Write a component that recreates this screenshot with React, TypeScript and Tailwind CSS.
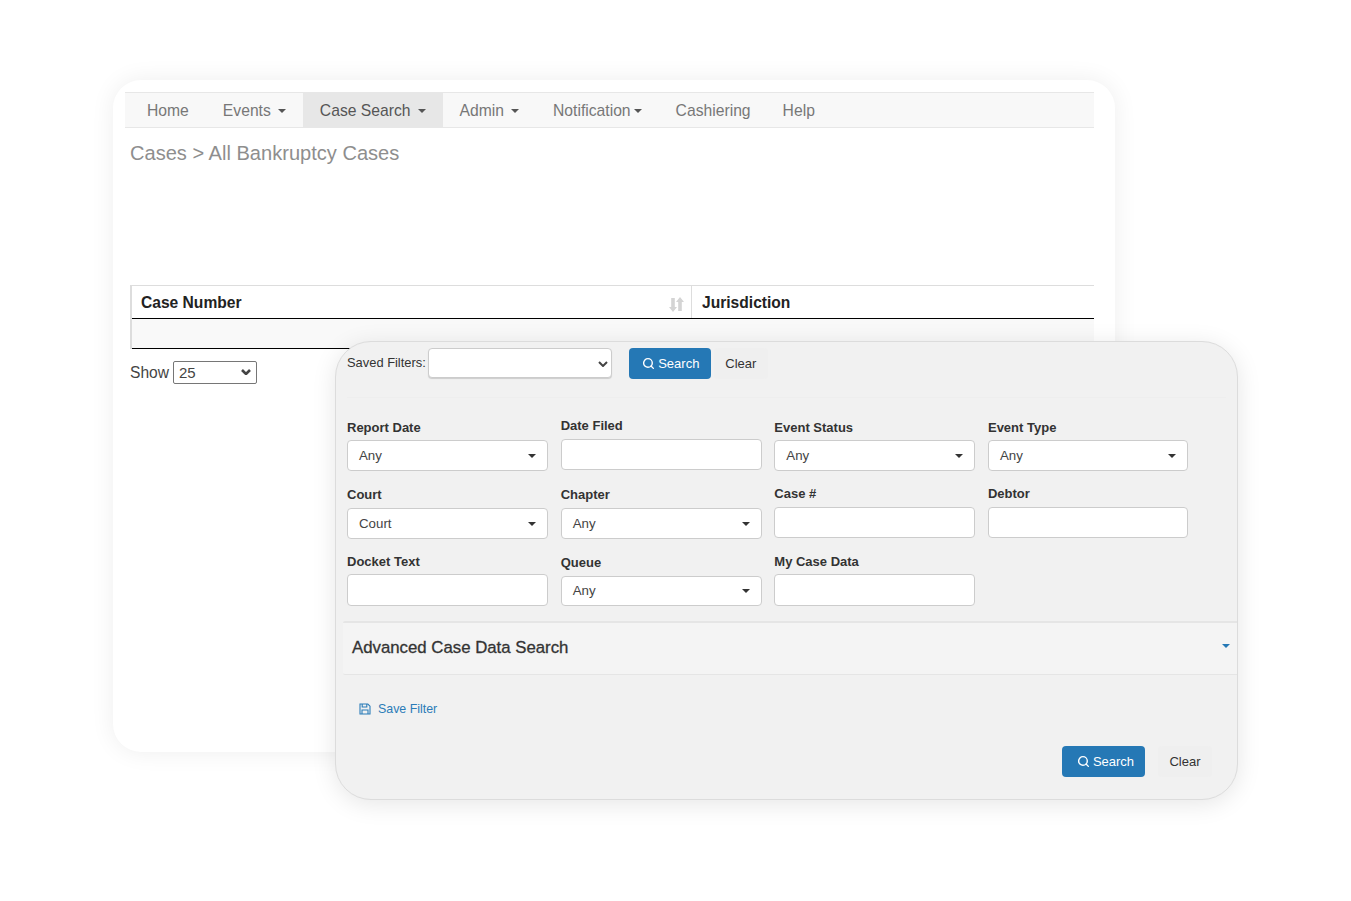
import React from 'react';
import { Search } from 'lucide-react';

const SANS = 'font-["Liberation_Sans",Arial,sans-serif]';

const NAV = [
  { label: 'Home', cls: 'gap-[7px]' },
  { label: 'Events', caret: true, cls: 'gap-[7px]' },
  { label: 'Case Search', caret: true, cls: 'gap-[7px] bg-[#e7e7e7] text-[#555]' },
  { label: 'Admin', caret: true, cls: 'gap-[7px]' },
  { label: 'Notification', caret: true, cls: 'gap-[3px]' },
  { label: 'Cashiering', cls: 'gap-[7px]' },
  { label: 'Help', cls: 'gap-[7px] -ml-[2px]' },
];

// bootstrap style caret
const Caret = ({ className = 'border-t-[#555]' }: { className?: string }) => (
  <span className={`inline-block w-0 h-0 border-x-4 border-x-transparent border-t-4 ${className}`} />
);

const Chevron = ({ className, weight }: { className: string; weight: number }) => (
  <svg className={`absolute ${className}`} width="10" height="6" viewBox="0 0 10 6" fill="none" stroke="#444" strokeWidth={weight}>
    <path d="M1 1l4 4 4-4" />
  </svg>
);

const Label = ({ children, className = '' }: { children: React.ReactNode; className?: string }) => (
  <label className={`block text-[13px] leading-[16px] font-bold text-[#333] ${className}`}>{children}</label>
);

const PickBox = ({ value, className = 'h-[31px]' }: { value: string; className?: string }) => (
  <div className={`flex items-center justify-between pl-[11px] pr-[11px] bg-white border border-[#ccc] rounded text-[13.3px] text-[#444] ${className}`}>
    <span>{value}</span>
    <Caret className="border-t-[#333]" />
  </div>
);

const TextBox = ({ className = 'h-[31px]' }: { className?: string }) => (
  <input className={`block w-full bg-white border border-[#ccc] rounded ${className}`} />
);

const SearchButton = ({ className }: { className: string }) => (
  <button className={`flex items-center justify-center gap-[3px] h-[31px] pt-[1px] rounded bg-[#2578b5] text-white text-[13px] ${className}`}>
    <Search size={13} strokeWidth={2.6} />
    Search
  </button>
);

const ClearButton = () => (
  <button className="h-[31px] w-[54px] pt-[1px] rounded bg-[#efefef] text-[#333] text-[13px]">Clear</button>
);

const FloppyIcon = () => (
  <svg width="12" height="12" viewBox="0 0 12 12" fill="none" stroke="#2b7cb8" strokeWidth="1.1">
    <path d="M1 1h7.800L11 3.200V11H1z" />
    <path d="M3.200 1v3h4.600V1M3 11V7h6v4" />
  </svg>
);

export default function App() {
  return (
    <div className={`relative w-[1351px] h-[901px] overflow-hidden bg-white ${SANS}`}>
      {/* ── Fenêtre arrière ── */}
      <div className="absolute left-[113px] top-[80px] w-[1002px] h-[672px] rounded-[28px] bg-white shadow-[0_0_24px_rgba(0,0,0,0.07)] pt-3 pl-3 pr-[21px]">
        <nav className="flex h-9 pl-[5px] bg-[#f8f8f8] border-y border-[#e7e7e7] text-[15.7px] text-[#777]">
          {NAV.map(item => (
            <a key={item.label} className={`flex items-center px-[17px] pt-[1px] ${item.cls}`}>
              {item.label}
              {item.caret && <Caret />}
            </a>
          ))}
        </nav>

        <div className="pl-[5px]">
          <h1 className="mt-[13px] text-[20.07px] leading-[24px] text-[#8e8e8e]">Cases &gt; All Bankruptcy Cases</h1>

          <div className="mt-[120px] border-l-2 border-[#ddd]">
            <div className="flex h-[34px] border-t border-[#ddd] border-b border-b-black text-[15.6px] font-bold text-[#222]">
              <div className="relative flex flex-1 items-center pt-[1px] pl-[9px] border-r border-[#ddd]">
                Case Number
                <svg className="absolute right-[7px] top-[11px]" width="15" height="15" viewBox="0 0 15 15" fill="#d4d4d4">
                  <path d="M0 10h2.200V1h3.600v9H8L4 15zM7 5h2.200V14h3.600V5H15L11 0z" />
                </svg>
              </div>
              <div className="flex w-[402px] items-center pt-[1px] pl-[10px]">Jurisdiction</div>
            </div>
            <div className="h-[30px] bg-[#f9f9f9] border-b border-black" />
          </div>

          <div className="mt-3 flex items-center gap-1 text-[15.6px] text-[#444]">
            Show
            <div className="relative">
              <select className="block appearance-none w-[84px] h-[23px] pl-[5px] bg-white border border-[#767676] rounded-[2px] text-[15px] text-[#444]">
                <option>25</option>
              </select>
              <Chevron className="right-[6px] top-[8px]" weight={2.6} />
            </div>
          </div>
        </div>
      </div>

      {/* ── Fenêtre avant : filtres ── */}
      <div className="absolute left-[335px] top-[341px] w-[903px] h-[459px] rounded-[36px] bg-[#f1f1f1] border border-[#dcdcdc] shadow-[0_4px_24px_rgba(0,0,0,0.1)] overflow-hidden">
        <div className="flex items-center h-[56px] mx-[11px] pb-[13px] border-b border-[#eeeeee]">
          <span className="text-[12.9px] text-[#333]">Saved Filters:</span>
          <div className="relative ml-[2px]">
            <select className="block appearance-none w-[184px] h-[30px] bg-white border border-[#ccc] rounded shadow-[0_1px_1px_rgba(0,0,0,0.15)]" />
            <Chevron className="right-[4px] top-[13px]" weight={2} />
          </div>
          <div className="ml-[17px]"><SearchButton className="w-[82px] pl-[2px]" /></div>
          <div className="ml-[3px]"><ClearButton /></div>
        </div>

        <div className="grid grid-cols-[201px_201px_201px_200px] gap-x-[12.66px] ml-[11px] mt-[20px]">
          {/* rangée 1 */}
          <div className="pt-[2px]">
            <Label className="mb-[4px]">Report Date</Label>
            <PickBox value="Any" />
          </div>
          <div>
            <Label className="mb-[5px]">Date Filed</Label>
            <TextBox />
          </div>
          <div className="pt-[2px]">
            <Label className="mb-[4px]">Event Status</Label>
            <PickBox value="Any" />
          </div>
          <div className="pt-[2px]">
            <Label className="mb-[4px]">Event Type</Label>
            <PickBox value="Any" />
          </div>

          {/* rangée 2 */}
          <div className="mt-[16px]">
            <Label className="mb-[5px]">Court</Label>
            <PickBox value="Court" />
          </div>
          <div className="mt-[16px]">
            <Label className="mb-[5px]">Chapter</Label>
            <PickBox value="Any" />
          </div>
          <div className="mt-[15px]">
            <Label className="mb-[5px]">Case #</Label>
            <TextBox />
          </div>
          <div className="mt-[15px]">
            <Label className="mb-[5px]">Debtor</Label>
            <TextBox />
          </div>

          {/* rangée 3 */}
          <div className="mt-[15px]">
            <Label className="mb-[4px]">Docket Text</Label>
            <TextBox className="h-[32px]" />
          </div>
          <div className="mt-[16px]">
            <Label className="mb-[5px]">Queue</Label>
            <PickBox value="Any" className="h-[30px]" />
          </div>
          <div className="mt-[15px]">
            <Label className="mb-[4px]">My Case Data</Label>
            <TextBox className="h-[32px]" />
          </div>
        </div>

        <div className="flex items-center justify-between h-[54px] mt-[15px] ml-[7px] pl-[9px] pr-[7px] pb-[2px] bg-[#f4f4f4] border-t-2 border-b border-[#e5e5e5] rounded-l-[2px]">
          <span className="text-[16.8px] text-[#333] [-webkit-text-stroke:0.3px_#333]">Advanced Case Data Search</span>
          <span className="mb-[4px] flex"><Caret className="border-t-[#2578b5]" /></span>
        </div>

        <a className="flex items-center gap-[7px] ml-[23px] mt-[25px] text-[12.4px] text-[#2b7cb8]">
          <FloppyIcon />
          Save Filter
        </a>

        <div className="flex justify-end gap-[13px] mr-[25px] mt-[27px]">
          <SearchButton className="w-[83px] pl-[4px]" />
          <ClearButton />
        </div>
      </div>
    </div>
  );
}
